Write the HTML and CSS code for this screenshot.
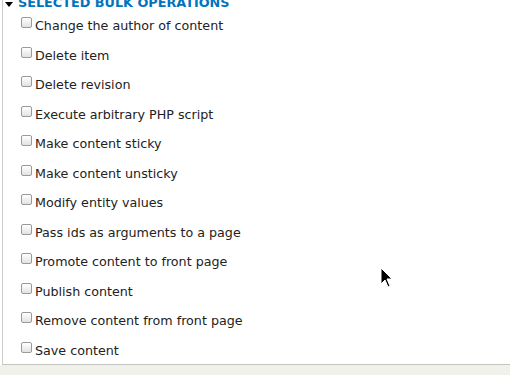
FILE: index.html
```html
<html>
<head>
<title>Bulk operations</title>
<link rel="stylesheet" href="styles.css">
</head>
<body>
<div class="fieldset">
	<div class="legend"><span class="arrow"></span>Selected bulk operations</div>
	<div class="options">
		<label class="option"><input type="checkbox" class="check">Change the author of content</label>
		<label class="option"><input type="checkbox" class="check">Delete item</label>
		<label class="option"><input type="checkbox" class="check">Delete revision</label>
		<label class="option"><input type="checkbox" class="check">Execute arbitrary PHP script</label>
		<label class="option"><input type="checkbox" class="check">Make content sticky</label>
		<label class="option"><input type="checkbox" class="check">Make content unsticky</label>
		<label class="option"><input type="checkbox" class="check">Modify entity values</label>
		<label class="option"><input type="checkbox" class="check">Pass ids as arguments to a page</label>
		<label class="option"><input type="checkbox" class="check">Promote content to front page</label>
		<label class="option"><input type="checkbox" class="check">Publish content</label>
		<label class="option"><input type="checkbox" class="check">Remove content from front page</label>
		<label class="option"><input type="checkbox" class="check">Save content</label>
	</div>
</div>
<div class="footer-bar"></div>
<svg class="cursor" width="14" height="22" viewBox="0 0 14 22">
	<path d="M1 1 L1 17 L5 13 L8 20 L10 19 L7 12 L12 12 Z" fill="#000" stroke="#fff" stroke-width="1"/>
</svg>
</body>
</html>
```

FILE: styles.css
```css
body {
	margin:0;
	background:#fff;
	font-family:'DejaVu Sans',sans-serif;
	font-size:12.7px;
	color:#222;
	overflow:hidden;
}
.fieldset {
	margin-left:2px;
	padding-top:1px;
	margin-top:-5px;
	border-left:1px solid #ccc;
	border-bottom:1px solid #c4c4c0;
	height:368px;
}
.legend {
	margin-left:2px;
	font-weight:bold;
	text-transform:uppercase;
	color:#0074bd;
	font-size:12.8px;
	line-height:14px;
	display:flex;
	align-items:center;
}
.arrow {
	width:0;
	height:0;
	border-left:4px solid transparent;
	border-right:4px solid transparent;
	border-top:5px solid #000;
	margin-right:5px;
	margin-top:2px;
}
.options {
	padding-left:17px;
	padding-top:1px;
}
.option {
	display:flex;
	align-items:center;
	height:29.5px;
	line-height:15px;
}
.check {
	-webkit-appearance:none;
	appearance:none;
	width:11px;
	height:11px;
	margin:-6px 3px 0 1px;
	border:1px solid #9a9a9a;
	border-radius:2px;
	background:linear-gradient(to bottom, #fff, #e2e2e2);
}
.footer-bar {
	height:12px;
	background:#f1f1ec;
}
.cursor {
	position:absolute;
	left:380px;
	top:267px;
}
```
